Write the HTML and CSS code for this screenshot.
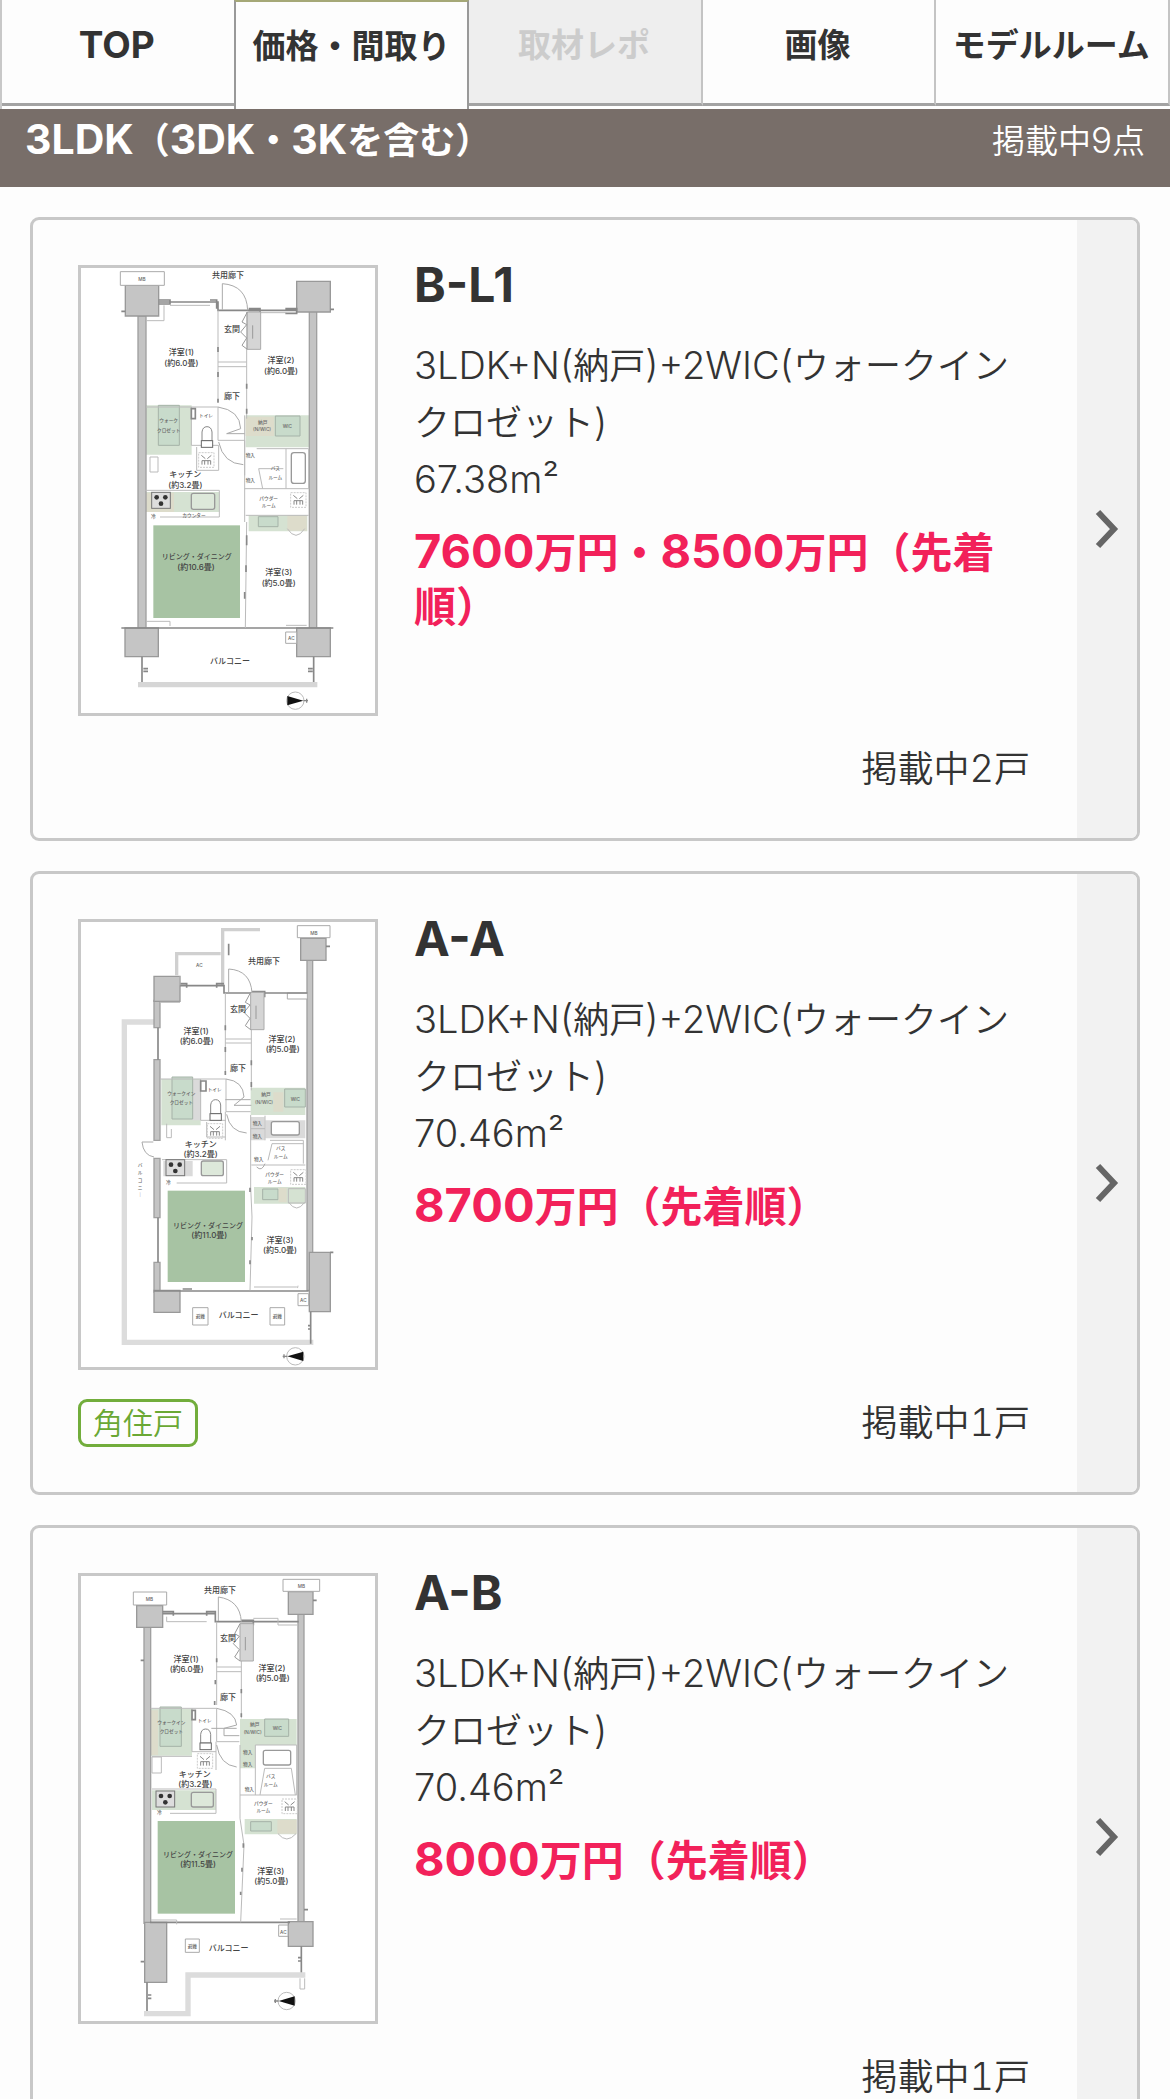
FILE: index.html
```html
<!DOCTYPE html>
<html lang="ja">
<head>
<meta charset="utf-8">
<meta name="viewport" content="width=device-width, initial-scale=1">
<title>価格・間取り</title>
<link rel="stylesheet" href="styles.css">
</head>
<body>
<svg class="defs" width="0" height="0" aria-hidden="true">
  <defs>
    <symbol id="chevron" viewBox="0 0 24 40"><path d="M3 3 19 20 3 37" fill="none" stroke="#666" stroke-width="6"/></symbol>
    <g id="stove"><rect width="56" height="48" fill="#ddd" stroke="#777" stroke-width="3"/><g fill="#333"><circle cx="15" cy="15" r="7"/><circle cx="41" cy="15" r="7"/><circle cx="28" cy="34" r="7"/></g></g>
    <g id="washer" fill="none" stroke="#888" stroke-width="3"><rect width="46" height="44" stroke="#ccc" stroke-dasharray="6 3"/><path d="M8 8 20 18M38 8 26 18M10 36V24H36V36M18 24V36M28 24V36"/></g>
    <g id="toilet" fill="#fff" stroke="#888" stroke-width="3"><path d="M2 44V18Q4 2 17 2T32 18V44Z"/><rect y="44" width="34" height="20" stroke="#666"/></g>
    <g id="shelf"><path d="M6 0H46V112H6Z" fill="#d5d5d5" stroke="#aaa" stroke-width="3"/><path d="M6 0-10 30 4 38-14 60 4 78-10 100 6 112M22 40V80" fill="none" stroke="#999" stroke-width="3"/></g>
    <g id="compass"><circle r="26" fill="#fff" stroke="#bbb" stroke-width="3"/><path d="M-24-14 24 0-24 14Z" fill="#111"/><path d="M24 0H38M34-6V6" stroke="#888" stroke-width="4"/></g>
  </defs>
</svg>

<nav class="tabs" aria-label="物件メニュー">
  <a class="tab" href="#top"><span class="en">TOP</span></a>
  <a class="tab tab-active" href="#plans" aria-current="page">価格・間取り</a>
  <button class="tab tab-disabled" type="button" disabled>取材レポ</button>
  <a class="tab" href="#images">画像</a>
  <a class="tab" href="#modelroom">モデルルーム</a>
</nav>

<header class="band" id="plans">
  <h1 class="band-title"><span class="en">3LDK</span>（<span class="en">3DK</span>・<span class="en">3K</span>を含む）</h1>
  <span class="band-count">掲載中<span class="en">9</span>点</span>
</header>

<main class="list">
  <a class="card" href="#b-l1">
    <div class="card-main">
      <div class="card-body">
        <svg class="plan" viewBox="33 38 882 1335" role="img" aria-label="B-L1の間取り図">
          <g class="soft"><path d="M225 450H365V598H225ZM527 480H718V576H527Z"/><path d="M536 780H712V828H536ZM225 710H448V770H225Z"/></g>
          <g class="closet"><path d="M265 450H328V570H265ZM616 482H690V542H616ZM565 784H624V814H565Z"/></g>
          <path class="tan" d="M527 484H612V542H527ZM652 780H710V826H652ZM228 712H312V770H228Z"/>
          <rect class="living" x="250" y="810" width="260" height="278"/>
          <g class="wall"><path d="M204 182H228V1118H204ZM718 165H740V1118H718Z"/></g>
          <g class="pillar"><path d="M166 90H266V182H166ZM680 78H781V170H680ZM165 1118H265V1204H165ZM680 1118H781V1204H680Z"/></g>
          <path class="box" d="M151 49H283V90H151ZM647 1130H680V1164H647Z"/>
          <g class="thick"><path d="M266 140H444V165H680M266 134H300V146H266M420 134H440V160M536 160H570V172H536M646 160H680V174H646M154 1118H790M781 162H792M154 168H166M216 1204V1290M731 1204V1290M220 1240H234M220 1248H234M714 1240H728M714 1248H728"/></g>
          <g class="line"><path d="M444 165V440M444 455H228M530 170V490M444 320H530M444 334H530M444 455V555H524M364 455V570H446M446 570V645H380V575M524 480V800M524 555V660M530 800 526 1118M524 700H718M648 580V700M527 780H716M560 580H716V700M578 700 566 640H640M300 150H420M228 196H282V150M560 172H650M226 705H448V785H270M228 1098H300V1112M648 1110H710"/></g>
          <g class="arc"><path d="M457 163V85Q530 90 533 165M444 455Q510 465 512 520L470 535H524M446 560Q460 625 520 628"/></g>
          <g class="thick"><path d="M444 275V290M444 350V365M444 430V442M530 385V400M530 460V475M530 840V870M528 930V950M524 1010V1030M364 460H376V490H364Z"/></g>
          <path class="floor" d="M204 1288H742"/>
          <rect class="fixture" x="664" y="592" width="42" height="92" rx="8"/>
          <rect class="fixture tint" x="364" y="714" width="70" height="48" rx="6"/>
          <path class="line" d="M652 820Q678 860 704 820M240 605H264V650H240Z"/>
          <use href="#stove" x="245" y="711"/><use href="#toilet" x="394" y="512"/><use href="#shelf" x="526" y="170"/>
          <use href="#washer" x="386" y="592"/><use href="#washer" x="662" y="712"/>
          <g class="label">
            <text x="474" y="69">共用廊下</text><text x="486" y="230">玄関</text><text x="486" y="432">廊下</text>
            <text x="334" y="298">洋室(1)</text><text x="334" y="331">(約6.0畳)</text>
            <text x="633" y="323">洋室(2)</text><text x="633" y="356">(約6.0畳)</text>
            <text x="346" y="664">キッチン</text><text x="346" y="697">(約3.2畳)</text>
            <text class="long" x="380" y="911">リビング・ダイニング</text><text x="378" y="943">(約10.6畳)</text>
            <text x="626" y="958">洋室(3)</text><text x="626" y="991">(約5.0畳)</text>
            <text x="480" y="1225">バルコニー</text>
          </g>
          <g class="label small">
            <text x="216" y="77">MB</text><text x="408" y="484">トイレ</text><text x="578" y="506">納戸</text><text x="576" y="527">(N/WIC)</text><text x="652" y="519">WIC</text>
            <text x="296" y="500">ウォーク</text><text x="296" y="530">クロゼット</text><text x="616" y="645">バス</text><text x="616" y="670">ルーム</text>
            <text x="596" y="733">パウダー</text><text x="596" y="756">ルーム</text><text x="541" y="604">物入</text><text x="541" y="680">物入</text><text x="664" y="1153">AC</text><text x="250" y="788">冷</text><text x="372" y="785">カウンター</text>
          </g>
          <use href="#compass" x="676" y="1336"/>
        </svg>
        <div class="info">
          <h2 class="name">B-L1</h2>
          <p class="layout"><span class="en">3LDK+N(</span>納戸<span class="en">)+2WIC(</span>ウォークインクロゼット<span class="en">)</span></p>
          <p class="layout"><span class="en">67.38m²</span></p>
          <p class="price"><span class="en">7600</span>万円・<span class="en">8500</span>万円（先着順）</p>
        </div>
      </div>
      <div class="card-foot"><span class="count">掲載中<span class="en">2</span>戸</span></div>
    </div>
    <div class="go"><svg class="chevron" aria-hidden="true"><use href="#chevron"/></svg></div>
  </a>

  <a class="card" href="#a-a">
    <div class="card-main">
      <div class="card-body">
        <svg class="plan" viewBox="33 35 882 1335" role="img" aria-label="A-Aの間取り図">
          <g class="soft"><path d="M274 506H392V645H274ZM542 532H706V614H542Z"/><path d="M552 830H706V880H552Z"/></g>
          <path class="grey" d="M366 508H392V630H366ZM280 752H368V798H280ZM586 630H706V684H586ZM542 620H584V690H542Z"/>
          <g class="closet"><path d="M306 500H368V626H306ZM644 536H706V590H644ZM578 836H624V868H578Z"/></g>
          <path class="tan" d="M610 546H640V604H610ZM626 832H650V876H626Z"/>
          <rect class="living" x="293" y="841" width="232" height="274"/>
          <path class="rail" d="M252 335H163V1296H730"/>
          <path class="rail-thin" d="M320 195V130H452M458 226V58H570"/>
          <g class="wall"><path d="M252 270H270V352H252ZM252 448H270V690H252ZM252 744H270V922H252ZM252 1056H270V1145H252ZM711 150H728V1140H711Z"/></g>
          <g class="pillar"><path d="M252 198H330V273H252ZM692 84H768V150H692ZM718 1026H781V1204H718ZM252 1140H330V1206H252Z"/></g>
          <path class="box" d="M682 46H780V82H682ZM684 1150H716V1186H684ZM368 1192H414V1244H368ZM600 1192H644V1244H600ZM652 248H712V266H652Z"/>
          <g class="thick"><path d="M330 226H462V248H712M330 220H350V232M440 232V220H462M546 244H584V258H546M252 1142H716M338 1136H366M768 108H780M781 1026H790M264 352V448M264 922V1056M722 1204V1300M714 1246H724M714 1256H724M476 100V135"/></g>
          <g class="line"><path d="M330 198V225M466 248V490M544 258V540M466 386H544M466 398H544M270 506H468M468 506V604H542M392 506V630H468M466 604V690M542 614V830M542 830 546 920 540 1140M544 764H706M600 690H700V760M594 750 606 700H700M276 748H470V818H320M270 276H330M552 1130H680Q684 1136 684 1126M410 635V680H466M290 640V682H304V656M585 616V690M542 655H585"/></g>
          <g class="arc"><path d="M476 246V176Q542 180 546 248M468 506Q520 512 522 560L492 585M466 568H542M492 585H544M470 612Q480 665 530 668M250 695H216Q220 735 252 740M560 770Q575 785 585 760"/></g>
          <g class="thick"><path d="M466 345V360M466 410V425M466 482V494M544 450V465M544 515V530M540 832V845M546 980V990M540 1050V1062M392 512H408V542H392Z"/></g>
          <rect class="fixture" x="604" y="634" width="84" height="40" rx="6"/>
          <rect class="fixture tint" x="394" y="752" width="66" height="44" rx="6"/>
          <path class="line" d="M656 876Q680 910 704 876M655 835H706V878H655Z"/>
          <use href="#stove" x="288" y="748"/><use href="#toilet" x="420" y="566"/><use href="#shelf" x="536" y="246"/>
          <use href="#washer" x="412" y="640"/><use href="#washer" x="662" y="778"/>
          <g class="label">
            <text x="582" y="161">共用廊下</text><text x="504" y="306">玄関</text><text x="504" y="481">廊下</text>
            <text x="378" y="370">洋室(1)</text><text x="380" y="400">(約6.0畳)</text>
            <text x="636" y="394">洋室(2)</text><text x="638" y="424">(約5.0畳)</text>
            <text x="392" y="709">キッチン</text><text x="392" y="739">(約3.2畳)</text>
            <text class="long" x="414" y="954">リビング・ダイニング</text><text x="418" y="984">(約11.0畳)</text>
            <text x="630" y="998">洋室(3)</text><text x="630" y="1027">(約5.0畳)</text>
            <text x="506" y="1224">バルコニー</text>
          </g>
          <g class="label small">
            <text x="732" y="73">MB</text><text x="388" y="170">AC</text><text x="434" y="542">トイレ</text><text x="588" y="558">納戸</text><text x="582" y="580">(N/WIC)</text><text x="676" y="572">WIC</text>
            <text x="334" y="554">ウォークイン</text><text x="334" y="580">クロゼット</text><text x="632" y="718">バス</text><text x="632" y="742">ルーム</text>
            <text x="614" y="796">パウダー</text><text x="614" y="818">ルーム</text><text x="562" y="645">物入</text><text x="562" y="684">物入</text><text x="566" y="752">物入</text><text x="700" y="1176">AC</text><text x="391" y="1224">避難</text><text x="622" y="1224">避難</text><text x="295" y="820">冷</text>
            <text x="210" y="770">バ</text><text x="210" y="792">ル</text><text x="210" y="814">コ</text><text x="210" y="836">ニ</text><text x="210" y="858">｜</text>
          </g>
          <use href="#compass" transform="translate(676 1338) rotate(180)"/>
        </svg>
        <div class="info">
          <h2 class="name">A-A</h2>
          <p class="layout"><span class="en">3LDK+N(</span>納戸<span class="en">)+2WIC(</span>ウォークインクロゼット<span class="en">)</span></p>
          <p class="layout"><span class="en">70.46m²</span></p>
          <p class="price"><span class="en">8700</span>万円（先着順）</p>
        </div>
      </div>
      <div class="card-foot"><span class="badge">角住戸</span><span class="count">掲載中<span class="en">1</span>戸</span></div>
    </div>
    <div class="go"><svg class="chevron" aria-hidden="true"><use href="#chevron"/></svg></div>
  </a>

  <a class="card" href="#a-b">
    <div class="card-main">
      <div class="card-body">
        <svg class="plan" viewBox="33 33 882 1335" role="img" aria-label="A-Bの間取り図">
          <g class="soft"><path d="M240 432H366V572H240ZM510 462H680V540H510ZM510 540H556V610H510Z"/><path d="M524 762H680V808H524ZM246 676H438V735H246Z"/></g>
          <g class="closet"><path d="M270 426H334V544H270ZM584 462H656V514H584ZM542 770H604V798H542Z"/></g>
          <path class="tan" d="M240 436H264V570H240ZM622 764H680V806H622Z"/>
          <rect class="living" x="263" y="768" width="232" height="278"/>
          <g class="wall"><path d="M222 186H242V1075H222ZM684 146H702V1075H684Z"/></g>
          <g class="pillar"><path d="M200 122H278V187H200ZM655 80H729V148H655ZM224 1072H290V1252H224ZM655 1070H729V1144H655Z"/></g>
          <path class="box" d="M190 81H290V120H190ZM639 43H749V79H639ZM626 1080H654V1114H626ZM346 1122H388V1162H346Z"/>
          <g class="thick"><path d="M278 146H436V170H686M278 140H310V152M410 152V140H436V166M514 166H550V178H514M240 1072H660M729 106H740M212 286H222M702 1034H714M212 1190H222M231 1252V1344M694 1144V1230M684 1178H696M684 1188H696M234 1290H244M234 1300H244"/></g>
          <g class="line"><path d="M440 170V420M514 180V460M440 306H514M440 320H514M242 430H440M440 430V530H508M366 430V560H438M438 530V615M510 540V760M510 760 522 840 512 1072M510 690H680V540H556M556 540V690M570 690 584 610H664L676 690M246 672H438V745H300M550 160H624V180H684M290 155V170H410M246 574H366M242 1065H320V1078M630 1062H680"/></g>
          <g class="arc"><path d="M445 168V96Q510 105 514 170M440 430Q496 440 500 480L462 490V512H508M424 490H500M440 540Q450 600 500 606"/></g>
          <g class="thick"><path d="M440 280V292M436 345V358M434 408V420M514 372V385M514 445V456M520 835V848M516 908V920M512 980V990M366 436H376V464H366Z"/></g>
          <path class="rail" d="M222 1346H354V1230H706"/>
          <path class="line" d="M690 1240V1272H704V1240"/>
          <rect class="fixture" x="580" y="556" width="82" height="44" rx="6"/>
          <rect class="fixture tint" x="364" y="682" width="66" height="44" rx="6"/>
          <path class="line" d="M624 806Q650 838 678 806M246 576H274V624H246Z"/>
          <use href="#stove" x="258" y="678"/><use href="#toilet" x="390" y="490"/><use href="#shelf" x="504" y="176"/>
          <use href="#washer" x="382" y="566"/><use href="#washer" x="636" y="702"/>
          <g class="label">
            <text x="450" y="84">共用廊下</text><text x="474" y="228">玄関</text><text x="474" y="405">廊下</text>
            <text x="348" y="292">洋室(1)</text><text x="350" y="321">(約6.0畳)</text>
            <text x="606" y="317">洋室(2)</text><text x="608" y="347">(約5.0畳)</text>
            <text x="374" y="635">キッチン</text><text x="376" y="665">(約3.2畳)</text>
            <text class="long" x="384" y="875">リビング・ダイニング</text><text x="384" y="905">(約11.5畳)</text>
            <text x="602" y="927">洋室(3)</text><text x="604" y="956">(約5.0畳)</text>
            <text x="476" y="1159">バルコニー</text>
          </g>
          <g class="label small">
            <text x="238" y="108">MB</text><text x="694" y="68">MB</text><text x="404" y="470">トイレ</text><text x="554" y="484">納戸</text><text x="548" y="506">(N/WIC)</text><text x="622" y="496">WIC</text>
            <text x="304" y="478">ウォークイン</text><text x="304" y="504">クロゼット</text><text x="602" y="640">バス</text><text x="602" y="664">ルーム</text>
            <text x="580" y="720">パウダー</text><text x="580" y="742">ルーム</text><text x="533" y="568">物入</text><text x="533" y="604">物入</text><text x="538" y="678">物入</text><text x="640" y="1106">AC</text><text x="367" y="1150">避難</text><text x="268" y="746">冷</text>
          </g>
          <use href="#compass" transform="translate(650 1308) rotate(180)"/>
        </svg>
        <div class="info">
          <h2 class="name">A-B</h2>
          <p class="layout"><span class="en">3LDK+N(</span>納戸<span class="en">)+2WIC(</span>ウォークインクロゼット<span class="en">)</span></p>
          <p class="layout"><span class="en">70.46m²</span></p>
          <p class="price"><span class="en">8000</span>万円（先着順）</p>
        </div>
      </div>
      <div class="card-foot"><span class="count">掲載中<span class="en">1</span>戸</span></div>
    </div>
    <div class="go"><svg class="chevron" aria-hidden="true"><use href="#chevron"/></svg></div>
  </a>
</main>
</body>
</html>
```

FILE: styles.css
```css
* { box-sizing: border-box; }

body {
  margin: 0;
  background: #fdfdfd;
  color: #333;
  font-family: Inter, "Noto Sans CJK JP", sans-serif;
  font-size: 36px;
  font-weight: 350;
}

h1, h2, p { margin: 0; }

.defs { display: block; }

/* Latin letters and digits are set larger to balance the kanji */
.en { font-size: 38px; line-height: 1; }

.tabs {
  display: grid;
  grid-template-columns: repeat(5, 1fr);
  height: 109px;
  padding-bottom: 3px;
  border-left: 2px solid #c8c8c8;
  background: #fff;
}

.tab {
  display: flex;
  align-items: center;
  justify-content: center;
  padding: 0 2px 14px 0;
  border: 0 solid #c4c4c4;
  border-right-width: 2px;
  border-bottom: 3px solid #a3a3a3;
  background: #fdfdfd;
  color: #333;
  font: inherit;
  font-size: 33px;
  font-weight: 700;
  line-height: 36px;
  text-decoration: none;
  white-space: nowrap;
}

.tab .en { font-size: 37px; }

.tab-active {
  margin: 0 0 -3px -2px;
  padding: 0 0 20px;
  border: 2px solid #999;
  border-top-color: #a5a877;
  border-bottom: 0;
}

.tab-disabled { background: #eee; color: #ccc; }

.band {
  display: flex;
  justify-content: space-between;
  align-items: center;
  min-height: 78px;
  padding: 0 25px 14px;
  background: #786e69;
  color: #fff;
}

.band-title { font-size: 36px; font-weight: 700; line-height: 48px; }
.band-title .en { font-size: 41px; }
.band-count { font-size: 33px; line-height: 48px; }
.band-count .en { font-size: 35px; }

.list {
  display: flex;
  flex-direction: column;
  gap: 30px;
  padding: 30px;
}

.card {
  display: flex;
  overflow: hidden;
  border: 3px solid #c8c8c8;
  border-radius: 9px;
  color: #333;
  text-decoration: none;
}

.card-main { flex: 1; padding: 45px 47px 45px 45px; }

.card-body {
  display: grid;
  grid-template-columns: 300px 1fr;
  align-items: start;
  gap: 36px;
}

.plan {
  display: block;
  width: 300px;
  height: 451px;
  border: 3px solid #c8c8c8;
  background: #fff;
}

.name { font-size: 48px; font-weight: 700; line-height: 40px; margin-bottom: 33px; }
.layout { line-height: 57px; }

.price {
  margin-top: 17px;
  color: #f2215a;
  font-size: 42px;
  font-weight: 700;
  line-height: 54px;
}

.price .en { font-size: 47px; }

.card-foot {
  display: flex;
  align-items: center;
  height: 48px;
  margin-top: 29px;
}

.badge {
  padding: 0 12px;
  border: 3px solid #72ad3c;
  border-radius: 9px;
  color: #6aa834;
  font-size: 30px;
  line-height: 42px;
}

.count {
  margin-left: auto;
  font-variant-numeric: tabular-nums;
  line-height: 48px;
}

.go {
  display: flex;
  align-items: center;
  justify-content: center;
  width: 60px;
  background: #f2f2f2;
}

.chevron { width: 24px; height: 40px; }

/* Floor plans */
.soft { fill: #d5e2d2; }
.closet { fill: #c8dbcb; stroke: #a5b2a8; stroke-width: 3px; }
.tan { fill: #dddccb; }
.grey { fill: #dadada; }
.living { fill: #a7c3a3; }
.wall { fill: #c4c4c4; stroke: #a0a0a0; stroke-width: 4px; }
.pillar { fill: #c5c5c5; stroke: #999; stroke-width: 4px; }
.box { fill: #fff; stroke: #aaa; stroke-width: 3px; }
.thick { fill: none; stroke: #888; stroke-width: 5px; }
.line { fill: none; stroke: #bbb; stroke-width: 3px; }
.arc { fill: none; stroke: #aaa; stroke-width: 3px; }
.rail { fill: none; stroke: #dcdcdc; stroke-width: 16px; }
.rail-thin { fill: none; stroke: #d0d0d0; stroke-width: 10px; }
.floor { stroke: #d6d6d6; stroke-width: 16px; }
.fixture { fill: #fff; stroke: #999; stroke-width: 4px; }
.tint { fill: #dde8da; }
.label { fill: #444; font-size: 24px; font-weight: 500; text-anchor: middle; }
.long { font-size: 21px; }
.small { fill: #666; font-size: 14px; }
```
